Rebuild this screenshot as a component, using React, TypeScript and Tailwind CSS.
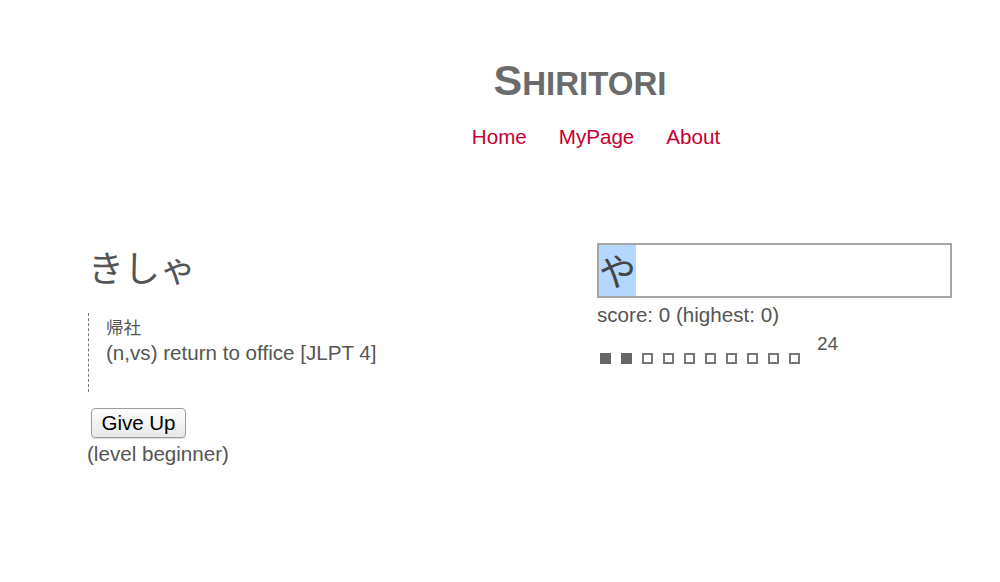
import React from "react";

const font = { fontFamily: '"Liberation Sans", "Noto Sans CJK JP", sans-serif' };

export default function App() {
  const boxes = [true, true, false, false, false, false, false, false, false, false];
  return (
    <div
      className="w-[1000px] h-[582px] bg-white text-[#555] text-[20.6px] leading-[24px] overflow-hidden"
      style={font}
    >
      <header className="flex flex-col items-center pt-[56px] pl-[160px]">
        <h1 className="font-bold text-[#6b6b6b] leading-[48px] whitespace-nowrap">
          <span className="text-[43px]">S</span>
          <span className="text-[33px]">HIRITORI</span>
        </h1>
        <nav className="flex gap-8 mt-[13px] ml-[32px] text-[#c5002e]">
          <span>Home</span>
          <span>MyPage</span>
          <span>About</span>
        </nav>
      </header>

      <main className="flex pl-[88px] mt-[94px]">
        <section className="w-[509px] pt-[6px] flex flex-col items-start">
          <div className="text-[36px] leading-[42px] text-[#555]">きしゃ</div>
          <div className="mt-[22px] border-l border-dashed border-[#777] pl-[17px] pt-[2px] pb-[27px]">
            <div className="text-[17.5px] leading-[26px]">帰社</div>
            <div className="leading-[24px]">(n,vs) return to office [JLPT 4]</div>
          </div>
          <button className="mt-[16px] ml-[3px] h-[30px] w-[95px] rounded-[4px] border border-[#9c9c9c] bg-gradient-to-b from-[#fdfdfd] to-[#e8e8e8] text-black text-[20.5px] leading-[24px] shadow-[0_1px_1px_rgba(0,0,0,0.15)]">
            Give Up
          </button>
          <div className="mt-[4px] -ml-[1px]">(level beginner)</div>
        </section>

        <section className="w-[355px] flex flex-col">
          <div className="h-[55px] border-2 border-[#a6a6a6] flex items-stretch">
            <span
              className="bg-[#b3d7ff] text-[#444] text-[37px] leading-[51px] w-[37px] flex items-center"
              style={{ fontFamily: '"Noto Sans CJK JP", sans-serif' }}
            >
              や
            </span>
          </div>
          <div className="mt-[5px]">score: 0 (highest: 0)</div>
          <div className="flex items-start">
            <div className="flex gap-[10px] mt-[26px] ml-[3px]">
              {boxes.map((f, i) => (
                <div
                  key={i}
                  className={
                    f
                      ? "w-[11px] h-[11px] bg-[#666]"
                      : "w-[11px] h-[11px] border-2 border-[#777] bg-white"
                  }
                />
              ))}
            </div>
            <div className="mt-[5px] ml-[17px] text-[19px]">24</div>
          </div>
        </section>
      </main>
    </div>
  );
}
